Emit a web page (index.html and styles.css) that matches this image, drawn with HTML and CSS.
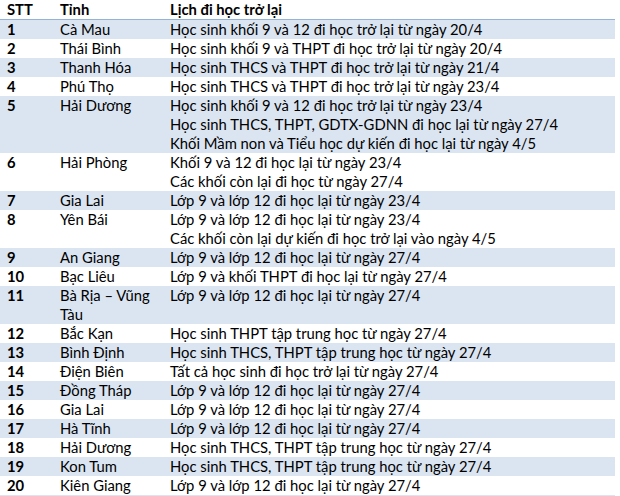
FILE: index.html
```html
<!DOCTYPE html>
<html lang="vi">
<head>
<meta charset="utf-8">
<link rel="stylesheet" href="styles.css">
</head>
<body>
<table class="tbl">
  <thead>
    <tr><th class="c-stt">STT</th><th class="c-tinh">Tỉnh</th><th class="c-lich">Lịch đi học trở lại</th></tr>
  </thead>
  <tbody>
    <tr class="alt"><td class="num">1</td><td>Cà Mau</td><td>Học sinh khối 9 và 12 đi học trở lại từ ngày 20/4</td></tr>
    <tr><td class="num">2</td><td>Thái Bình</td><td>Học sinh khối 9 và THPT đi học trở lại từ ngày 20/4</td></tr>
    <tr class="alt"><td class="num">3</td><td>Thanh Hóa</td><td>Học sinh THCS và THPT đi học trở lại từ ngày 21/4</td></tr>
    <tr><td class="num">4</td><td>Phú Thọ</td><td>Học sinh THCS và THPT đi học trở lại từ ngày 23/4</td></tr>
    <tr class="alt"><td class="num">5</td><td>Hải Dương</td><td>Học sinh khối 9 và 12 đi học trở lại từ ngày 23/4<br>Học sinh THCS, THPT, GDTX-GDNN đi học lại từ ngày 27/4<br>Khối Mầm non và Tiểu học dự kiến đi học lại từ ngày 4/5</td></tr>
    <tr><td class="num">6</td><td>Hải Phòng</td><td>Khối 9 và 12 đi học lại từ ngày 23/4<br>Các khối còn lại đi học từ ngày 27/4</td></tr>
    <tr class="alt"><td class="num">7</td><td>Gia Lai</td><td>Lớp 9 và lớp 12 đi học lại từ ngày 23/4</td></tr>
    <tr><td class="num">8</td><td>Yên Bái</td><td>Lớp 9 và lớp 12 đi học lại từ ngày 23/4<br>Các khối còn lại dự kiến đi học trở lại vào ngày 4/5</td></tr>
    <tr class="alt"><td class="num">9</td><td>An Giang</td><td>Lớp 9 và lớp 12 đi học lại từ ngày 27/4</td></tr>
    <tr><td class="num">10</td><td>Bạc Liêu</td><td>Lớp 9 và khối THPT đi học lại từ ngày 27/4</td></tr>
    <tr class="alt"><td class="num">11</td><td>Bà Rịa – Vũng<br>Tàu</td><td>Lớp 9 và lớp 12 đi học lại từ ngày 27/4</td></tr>
    <tr><td class="num">12</td><td>Bắc Kạn</td><td>Học sinh THPT tập trung học từ ngày 27/4</td></tr>
    <tr class="alt"><td class="num">13</td><td>Bình Định</td><td>Học sinh THCS, THPT tập trung học từ ngày 27/4</td></tr>
    <tr><td class="num">14</td><td>Điện Biên</td><td>Tất cả học sinh đi học trở lại từ ngày 27/4</td></tr>
    <tr class="alt"><td class="num">15</td><td>Đồng Tháp</td><td>Lớp 9 và lớp 12 đi học lại từ ngày 27/4</td></tr>
    <tr><td class="num">16</td><td>Gia Lai</td><td>Lớp 9 và lớp 12 đi học lại từ ngày 27/4</td></tr>
    <tr class="alt"><td class="num">17</td><td>Hà Tĩnh</td><td>Lớp 9 và lớp 12 đi học lại từ ngày 27/4</td></tr>
    <tr><td class="num">18</td><td>Hải Dương</td><td>Học sinh THCS, THPT tập trung học từ ngày 27/4</td></tr>
    <tr class="alt"><td class="num">19</td><td>Kon Tum</td><td>Học sinh THCS, THPT tập trung học từ ngày 27/4</td></tr>
    <tr><td class="num">20</td><td>Kiên Giang</td><td>Lớp 9 và lớp 12 đi học lại từ ngày 27/4</td></tr>
    <tr class="alt"><td class="num">&nbsp;</td><td></td><td></td></tr>
  </tbody>
</table>
</body>
</html>
```

FILE: styles.css
```css
html, body {
  margin: 0;
  padding: 0;
  background: #ffffff;
}
body {
  font-family: Lato, "Open Sans", sans-serif;
  font-size: 14.8px;
  color: #000000;
  overflow: hidden;
}
.tbl {
  border-collapse: collapse;
  width: 615px;
  table-layout: fixed;
}
.tbl th, .tbl td {
  padding: 0 0 0 7px;
  line-height: 19px;
  vertical-align: top;
  text-align: left;
  white-space: nowrap;
}
.tbl th {
  font-weight: 700;
  height: 18px;
  border-bottom: 1px solid #95b3d7;
}
.c-stt { width: 46px; }
.c-tinh { width: 103px; }
.tbl tbody tr.alt td {
  background: #dbe5f1;
}
.tbl td.num {
  font-weight: 700;
}
```
